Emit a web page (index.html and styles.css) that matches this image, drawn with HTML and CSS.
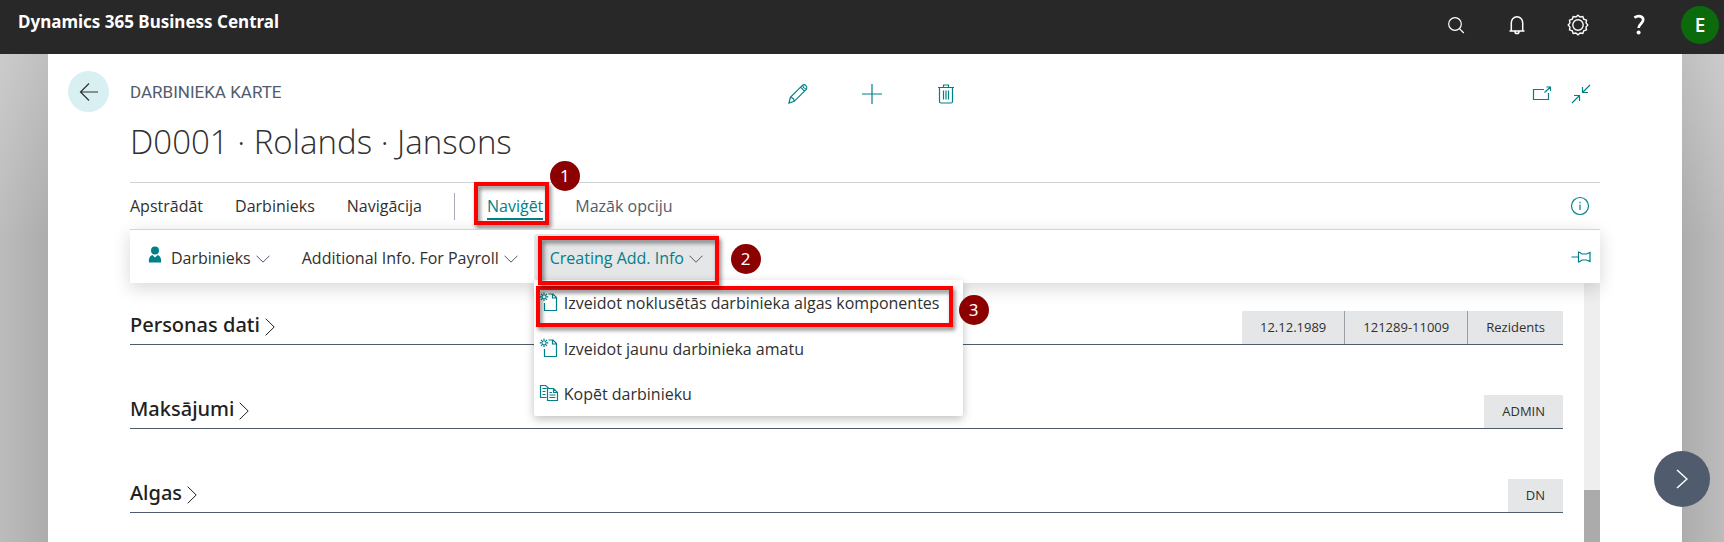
FILE: index.html
```html
<!DOCTYPE html>
<html lang="lv">
<head>
<meta charset="utf-8">
<meta name="viewport" content="width=device-width, initial-scale=1">
<title>Darbinieka karte</title>
<link rel="stylesheet" href="styles.css">
</head>
<body>
<header class="topbar">
  <a class="brand" href="#">Dynamics 365 Business Central</a>
  <nav class="topbar-tools" aria-label="Rīki">
    <button class="tool" type="button" aria-label="Meklēt"><svg width="22" height="22" viewBox="0 0 22 22"><circle cx="10" cy="10" r="6.3"/><path d="M14.4 14.6 18.8 19"/></svg></button>
    <button class="tool" type="button" aria-label="Paziņojumi"><svg width="22" height="22" viewBox="0 0 22 22"><path d="M3.500 17h15M5.300 17V8.700a5.700 6 0 0 1 11.400 0V17M9 17.500c0 2.800 4 2.800 4 0" stroke-width="1.5"/></svg></button>
    <button class="tool" type="button" aria-label="Iestatījumi"><svg width="22" height="22" viewBox="0 0 22 22"><circle cx="11" cy="11" r="5.2" stroke-width="1.4"/><path stroke-width="1.4" d="M11 1.2 13.1 3 15.8 2.5 16.7 5.1 19.5 6.1 19 8.9 20.8 11 19 13.1 19.5 15.9 16.7 16.9 15.8 19.5 13.1 19 11 20.8 8.9 19 6.2 19.5 5.3 16.9 2.5 15.9 3 13.1 1.2 11 3 8.9 2.5 6.1 5.3 5.1 6.2 2.5 8.9 3Z"/></svg></button>
    <button class="tool" type="button" aria-label="Palīdzība"><svg width="22" height="22" viewBox="0 0 22 22"><path stroke-width="2.7" d="M6.4 3.6C10.6.9 15.2 2.2 15.2 5.8c0 3.6-4.6 4.2-4.6 8.2"/><circle class="dot" cx="10.6" cy="18.6" r="2"/></svg></button>
    <button class="avatar" type="button" aria-label="Konts">E</button>
  </nav>
</header>

<main class="card">
  <div class="card-head">
    <button class="back" type="button" aria-label="Atpakaļ"><svg width="20" height="20" viewBox="0 0 20 20"><path d="M19 10H1.5M10 1.5 1.5 10l8.500 8.500"/></svg></button>
    <p class="caption">DARBINIEKA KARTE</p>
    <div class="card-actions">
      <button class="icon-btn" type="button" aria-label="Rediģēt"><svg width="22" height="22" viewBox="0 0 22 22"><path d="M2 20l1.400-5.600L15.600 2.200c2.200-1.600 5.400 1.600 3.900 3.900L7.300 18.300ZM3.400 14.400c2.200.2 3.700 1.700 3.900 3.900M13.600 4.200l3.900 3.900M15.500 2.300c.6 2 2 3.400 4 4"/></svg></button>
      <button class="icon-btn" type="button" aria-label="Jauns"><svg width="22" height="22" viewBox="0 0 22 22"><path d="M11 1v20M1 11h20"/></svg></button>
      <button class="icon-btn" type="button" aria-label="Dzēst"><svg width="22" height="22" viewBox="0 0 22 22"><path d="M3 4.500h16M8.500 4V2h5v2M4.500 5v13.500q0 1.500 1.500 1.500h10q1.500 0 1.500-1.500V5M8.500 7.500v9M11 7.500v9M13.500 7.500v9"/></svg></button>
    </div>
    <div class="window-actions">
      <button class="icon-btn" type="button" aria-label="Atvērt jaunā logā"><svg width="20" height="20" viewBox="0 0 20 20"><path d="M12 5.500H1.500v10h15V9M12.500 8.500 18.500 3M14.500 3h4v4"/></svg></button>
      <button class="icon-btn" type="button" aria-label="Samazināt"><svg width="20" height="20" viewBox="0 0 20 20"><path d="M19 1l-7.500 7.500M11.500 3v5.500H17M1 19l7.500-7.500M3 11.500h5.500V17"/></svg></button>
    </div>
  </div>

  <div class="content">
    <h1 class="title">D0001 · Rolands · Jansons</h1>

    <nav class="tabs" aria-label="Izvēlne">
      <button class="tab" type="button">Apstrādāt</button>
      <button class="tab" type="button">Darbinieks</button>
      <button class="tab" type="button">Navigācija</button>
      <span class="divider"></span>
      <span class="anchor">
        <button class="tab tab-active" type="button">Naviģēt</button>
        <span class="mark mark-tab"></span><span class="badge badge-tab">1</span>
      </span>
      <button class="tab tab-muted" type="button">Mazāk opciju</button>
      <button class="icon-btn end" type="button" aria-label="Informācija"><svg width="20" height="20" viewBox="0 0 20 20"><circle cx="10" cy="10" r="8.500"/><path d="M10 8.500V14M10 5.800v1.400"/></svg></button>
    </nav>

    <div class="actions">
      <button class="action" type="button"><svg class="solid person" width="14" height="18" viewBox="0 0 14 18"><circle cx="7" cy="4.500" r="4"/><path d="M1 16.500c-.6-3.500.8-6.600 3.300-7.500L7 11.500 9.700 9c2.500.9 3.900 4 3.300 7.500Z"/></svg>Darbinieks<svg class="chev" width="14" height="8" viewBox="0 0 14 8"><path d="M.5.700 7 7.200 13.500.700"/></svg></button>
      <button class="action" type="button">Additional Info. For Payroll<svg class="chev" width="14" height="8" viewBox="0 0 14 8"><path d="M.5.700 7 7.200 13.500.700"/></svg></button>
      <div class="anchor drop">
        <button class="action action-open" type="button" aria-expanded="true">Creating Add. Info<svg class="chev" width="14" height="8" viewBox="0 0 14 8"><path d="M.5.700 7 7.200 13.500.700"/></svg></button>
        <div class="menu">
          <button class="menu-item" type="button"><svg width="20" height="20" viewBox="0 0 20 20"><path d="M9.500 2H14l3.500 3.500v13h-12V11M13.500 2v4h4"/><path d="M5 .500v3M5 6v3M.700 4.800h3M6.300 4.800h3M2 1.800l2 2M6 5.800l2 2M8 1.800l-2 2M4 5.800l-2 2"/></svg>Izveidot noklusētās darbinieka algas komponentes</button>
          <button class="menu-item" type="button"><svg width="20" height="20" viewBox="0 0 20 20"><path d="M9.500 2H14l3.500 3.500v13h-12V11M13.500 2v4h4"/><path d="M5 .500v3M5 6v3M.700 4.800h3M6.300 4.800h3M2 1.800l2 2M6 5.800l2 2M8 1.800l-2 2M4 5.800l-2 2"/></svg>Izveidot jaunu darbinieka amatu</button>
          <button class="menu-item" type="button"><svg width="20" height="20" viewBox="0 0 20 20"><path d="M7.500 14.500h-6v-12h5l3 2.500M3.500 5.500h4M3.500 8.500h3M3.500 11.500h3M8.500 5.500h6l4 4v8h-10ZM14.500 5.500v4h4M10.500 9.500h2.500M10.500 12h6M10.500 14.500h6"/></svg>Kopēt darbinieku</button>
          <span class="mark mark-item"></span><span class="badge badge-item">3</span>
        </div>
        <span class="mark mark-action"></span><span class="badge badge-action">2</span>
      </div>
      <button class="icon-btn end" type="button" aria-label="Piespraust"><svg width="20" height="20" viewBox="0 0 20 20"><path d="M.500 10H7M7.500 4.500v11M8 5l3 2h4.500L19 5.500v9L15.500 13H11l-3 2"/></svg></button>
    </div>

    <div class="body">
      <div class="sections">
        <section class="section">
          <h2><button class="section-toggle" type="button">Personas dati<svg width="10" height="18" viewBox="0 0 10 18"><path d="M.700.700 9.200 9 .700 17.300"/></svg></button></h2>
          <ul class="facts"><li>12.12.1989</li><li>121289-11009</li><li>Rezidents</li></ul>
        </section>
        <section class="section">
          <h2><button class="section-toggle" type="button">Maksājumi<svg width="10" height="18" viewBox="0 0 10 18"><path d="M.700.700 9.200 9 .700 17.300"/></svg></button></h2>
          <ul class="facts"><li>ADMIN</li></ul>
        </section>
        <section class="section">
          <h2><button class="section-toggle" type="button">Algas<svg width="10" height="18" viewBox="0 0 10 18"><path d="M.700.700 9.200 9 .700 17.300"/></svg></button></h2>
          <ul class="facts"><li>DN</li></ul>
        </section>
      </div>
      <div class="scroll"><div class="thumb"></div></div>
    </div>
  </div>
</main>
<button class="next" type="button" aria-label="Nākamais"><svg width="12" height="20" viewBox="0 0 12 20"><path d="M1 1l10 9-10 9"/></svg></button>
</body>
</html>
```
FILE: styles.css
```css
* { box-sizing: border-box; }

body {
  margin: 0;
  min-height: 100vh;
  display: flex;
  flex-direction: column;
  position: relative;
  font-family: "Open Sans", "Noto Sans", sans-serif;
  font-size: 16px;
  color: #303030;
  background:
    linear-gradient(180deg, rgba(255, 255, 255, .3), rgba(255, 255, 255, 0) 240px),
    linear-gradient(90deg, #bcbcbc, #acacac 48px, #acacac calc(100% - 42px), #bcbcbc);
}

button {
  font: inherit;
  color: inherit;
  background: none;
  border: 0;
  padding: 0;
  white-space: nowrap;
}

svg {
  display: block;
  flex: none;
  fill: none;
  stroke: currentColor;
  stroke-width: 1.2;
}

.topbar {
  height: 54px;
  display: flex;
  justify-content: space-between;
  padding: 0 5px 0 18px;
  background: #282828;
  color: #fff;
}

.brand {
  align-self: flex-start;
  padding-top: 10px;
  color: #fff;
  font-family: "Noto Sans", sans-serif;
  font-size: 17px;
  line-height: 24px;
  font-weight: 700;
  text-decoration: none;
}

.topbar-tools {
  display: flex;
  align-items: center;
  padding-bottom: 4px;
  gap: 39px;
}

.tool .dot { fill: currentColor; stroke: none; }

.avatar {
  width: 38px;
  height: 38px;
  margin-left: -8px;
  border-radius: 50%;
  background: #0b6a0b;
  font-size: 19px;
  font-weight: 600;
}

.card {
  flex: 1;
  display: flex;
  flex-direction: column;
  margin: 0 42px 0 48px;
  background: #fff;
}

.card-head {
  display: grid;
  grid-template-columns: 62px 1fr auto 1fr;
  align-items: center;
  padding: 17px 91px 0 20px;
}

.back {
  width: 41px;
  height: 41px;
  display: grid;
  place-items: center;
  border-radius: 50%;
  background: #d9f0f2;
}

.caption {
  margin: 0;
  color: #505c6d;
  font-family: Roboto, sans-serif;
  font-size: 17px;
}

.card-actions { display: flex; gap: 52px; padding: 4px 0 0 22px; }
.window-actions { display: flex; gap: 19px; justify-self: end; padding-top: 4px; }
.icon-btn { color: #008089; }

.content {
  flex: 1;
  display: flex;
  flex-direction: column;
  padding: 0 82px;
}

.title {
  margin: 0;
  padding: 5px 0 16px;
  font-size: 33px;
  line-height: 49px;
  font-weight: 300;
}

.tabs {
  height: 47px;
  display: flex;
  align-items: center;
  gap: 32px;
  padding-right: 10px;
  border-top: 1px solid #d0d3d8;
}

.tab { line-height: 24px; padding-top: 2px; border-bottom: 2px solid transparent; }
.tab-active { color: #008089; border-color: #008089; }
.tab-muted { color: #505c6d; }
.divider { width: 1px; height: 27px; background: #a6abb5; }
.end { margin-left: auto; }
.anchor { position: relative; }

.actions {
  position: relative;
  z-index: 1;
  height: 54px;
  display: flex;
  align-items: stretch;
  padding-right: 9px;
  background: #fff;
  border-top: 1px solid #d0d3d8;
  box-shadow: 0 5px 18px rgba(0, 0, 0, .16);
}

.action {
  display: flex;
  align-items: center;
  gap: 5px;
  padding: 2px 16px 0;
}

.chev { color: #505c6d; stroke-width: 1; margin-top: 2px; }
.solid { fill: currentColor; stroke: none; color: #008089; }
.person { margin: 0 4px 5px 2px; }

.drop { display: flex; margin: 4px 0 3px; }
.action-open { background: #e5e6e8; color: #008089; border-radius: 3px; }

.menu {
  position: absolute;
  left: 0;
  top: 46px;
  width: 429px;
  background: #fff;
  border-radius: 2px;
  box-shadow: 0 3px 10px rgba(0, 0, 0, .25);
}

.menu-item {
  width: 100%;
  height: 46px;
  display: flex;
  align-items: center;
  gap: 5px;
  padding: 0 5px;
}

.menu-item:last-of-type { height: 44px; }
.menu-item svg { color: #008089; margin-bottom: 3px; }

.mark {
  position: absolute;
  border: 4px solid #f00;
  filter: drop-shadow(2px 3px 2px rgba(0, 0, 0, .5));
  pointer-events: none;
}

.mark-tab { inset: -10px -6px -5px -13px; }
.mark-action { inset: 2px 0 -5px 4px; }
.mark-item { left: 2px; top: 6px; width: 417px; height: 41px; }

.badge {
  position: absolute;
  width: 30px;
  height: 30px;
  border-radius: 50%;
  background: #8b0000;
  color: #fff;
  font: 17px/30px "Noto Sans", sans-serif;
  text-align: center;
}

.badge-tab { left: 63px; top: -31px; }
.badge-action { left: 197px; top: 10px; }
.badge-item { left: 425px; top: 15px; }

.body { flex: 1; display: flex; }

.sections {
  flex: 1;
  display: flex;
  flex-direction: column;
  gap: 50px;
  padding: 28px 21px 28px 0;
}

.section {
  display: flex;
  justify-content: space-between;
  align-items: center;
  border-bottom: 1px solid #505c6d;
}

.section h2 {
  margin: 0;
  color: #212121;
  font-family: "Noto Sans", sans-serif;
  font-size: 20px;
  line-height: 24px;
  font-weight: 500;
}

.section-toggle { display: flex; align-items: center; gap: 5px; padding-bottom: 5px; }
.section-toggle svg { margin-top: 4px; stroke-width: 1; }

.facts {
  display: flex;
  margin: 0;
  padding: 0;
  list-style: none;
  background: #e5e6e8;
  font-size: 13px;
  line-height: 33px;
}

.facts li { padding: 0 18px; }
.facts li + li { border-left: 1px solid #9a9da3; }

.scroll {
  width: 16px;
  display: flex;
  flex-direction: column;
  justify-content: flex-end;
  background: #eee;
}

.thumb { height: 20%; background: #ababab; }

.next {
  position: absolute;
  right: 14px;
  bottom: 35px;
  width: 56px;
  height: 56px;
  display: grid;
  place-items: center;
  border-radius: 50%;
  background: #505c6d;
  color: #fff;
}

.next svg { stroke-width: 1.5; }
```
